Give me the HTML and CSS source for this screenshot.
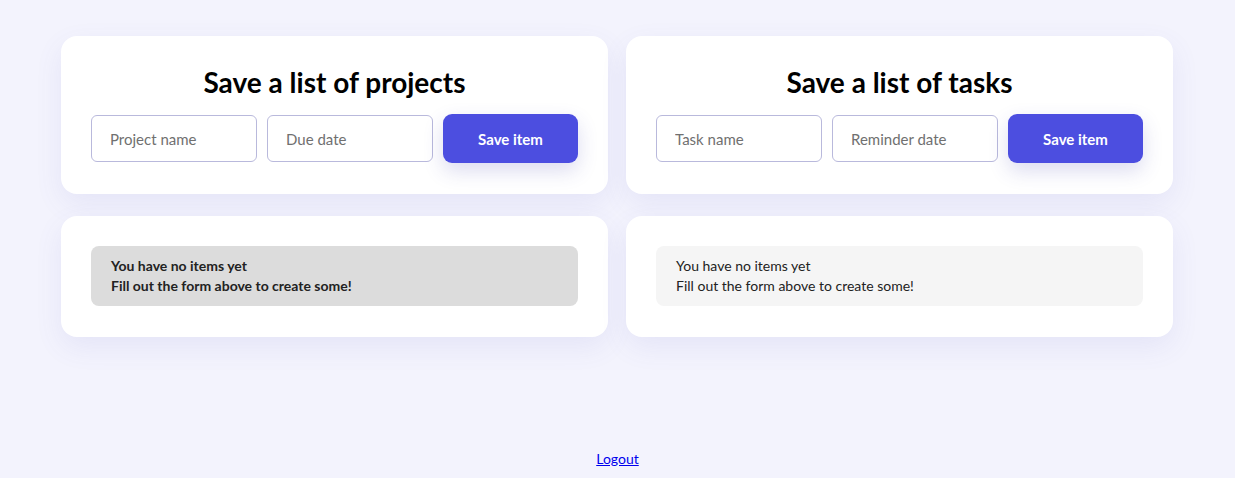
FILE: index.html
```html
<!DOCTYPE html>
<html lang="en">
<head>
  <meta charset="UTF-8">
  <title>Lists</title>
  <link rel="stylesheet" href="styles.css">
</head>
<body>
  <main class="grid">
    <section class="card">
      <h2>Save a list of projects</h2>
      <form class="form">
        <input type="text" placeholder="Project name">
        <input type="text" placeholder="Due date">
        <button type="button">Save item</button>
      </form>
    </section>
    <section class="card">
      <h2>Save a list of tasks</h2>
      <form class="form">
        <input type="text" placeholder="Task name">
        <input type="text" placeholder="Reminder date">
        <button type="button">Save item</button>
      </form>
    </section>
    <section class="card">
      <div class="empty empty-dark">
        <p>You have no items yet</p>
        <p>Fill out the form above to create some!</p>
      </div>
    </section>
    <section class="card">
      <div class="empty">
        <p>You have no items yet</p>
        <p>Fill out the form above to create some!</p>
      </div>
    </section>
  </main>
  <footer class="footer">
    <a href="#">Logout</a>
  </footer>
</body>
</html>
```

FILE: styles.css
```css
body { margin: 0; background-color: #f3f3fd; font-family: Lato, "Open Sans", sans-serif; color: #000; }

.grid { display: grid; grid-template-columns: 547px 547px; column-gap: 18px; row-gap: 22px; justify-content: center; padding-top: 36px; margin-left: -1px; }
.card { background-color: #fff; border-radius: 16px; padding: 30px 30px 31px; box-shadow: 0 10px 28px rgba(90, 90, 190, 0.09); }
.card h2 { margin: 0 0 16px; font-size: 28px; line-height: 32px; font-weight: 700; text-align: center; }

.form { display: flex; gap: 10px; align-items: center; }
.form input { box-sizing: border-box; width: 166px; height: 47px; padding: 0 18px; border: 1px solid #b9b9dc; border-radius: 6px; font-family: inherit; font-size: 15px; color: #333; }
.form input::placeholder { color: #707070; }
.form button { flex: 1; height: 49px; background-color: #4c4ee0; color: #fff; border: none; border-radius: 9px; font-family: inherit; font-size: 15px; font-weight: 700; box-shadow: 0 8px 20px rgba(60, 60, 170, 0.18); cursor: pointer; }

.empty { background-color: #f5f5f5; border-radius: 8px; padding: 10px 20px; font-size: 14px; line-height: 20px; color: #222; }
.empty p { margin: 0; }
.empty-dark { background-color: #dcdcdc; font-weight: 700; }

.footer { text-align: center; margin-top: 113px; font-size: 14px; }
.footer a { color: #0000ee; }
```
